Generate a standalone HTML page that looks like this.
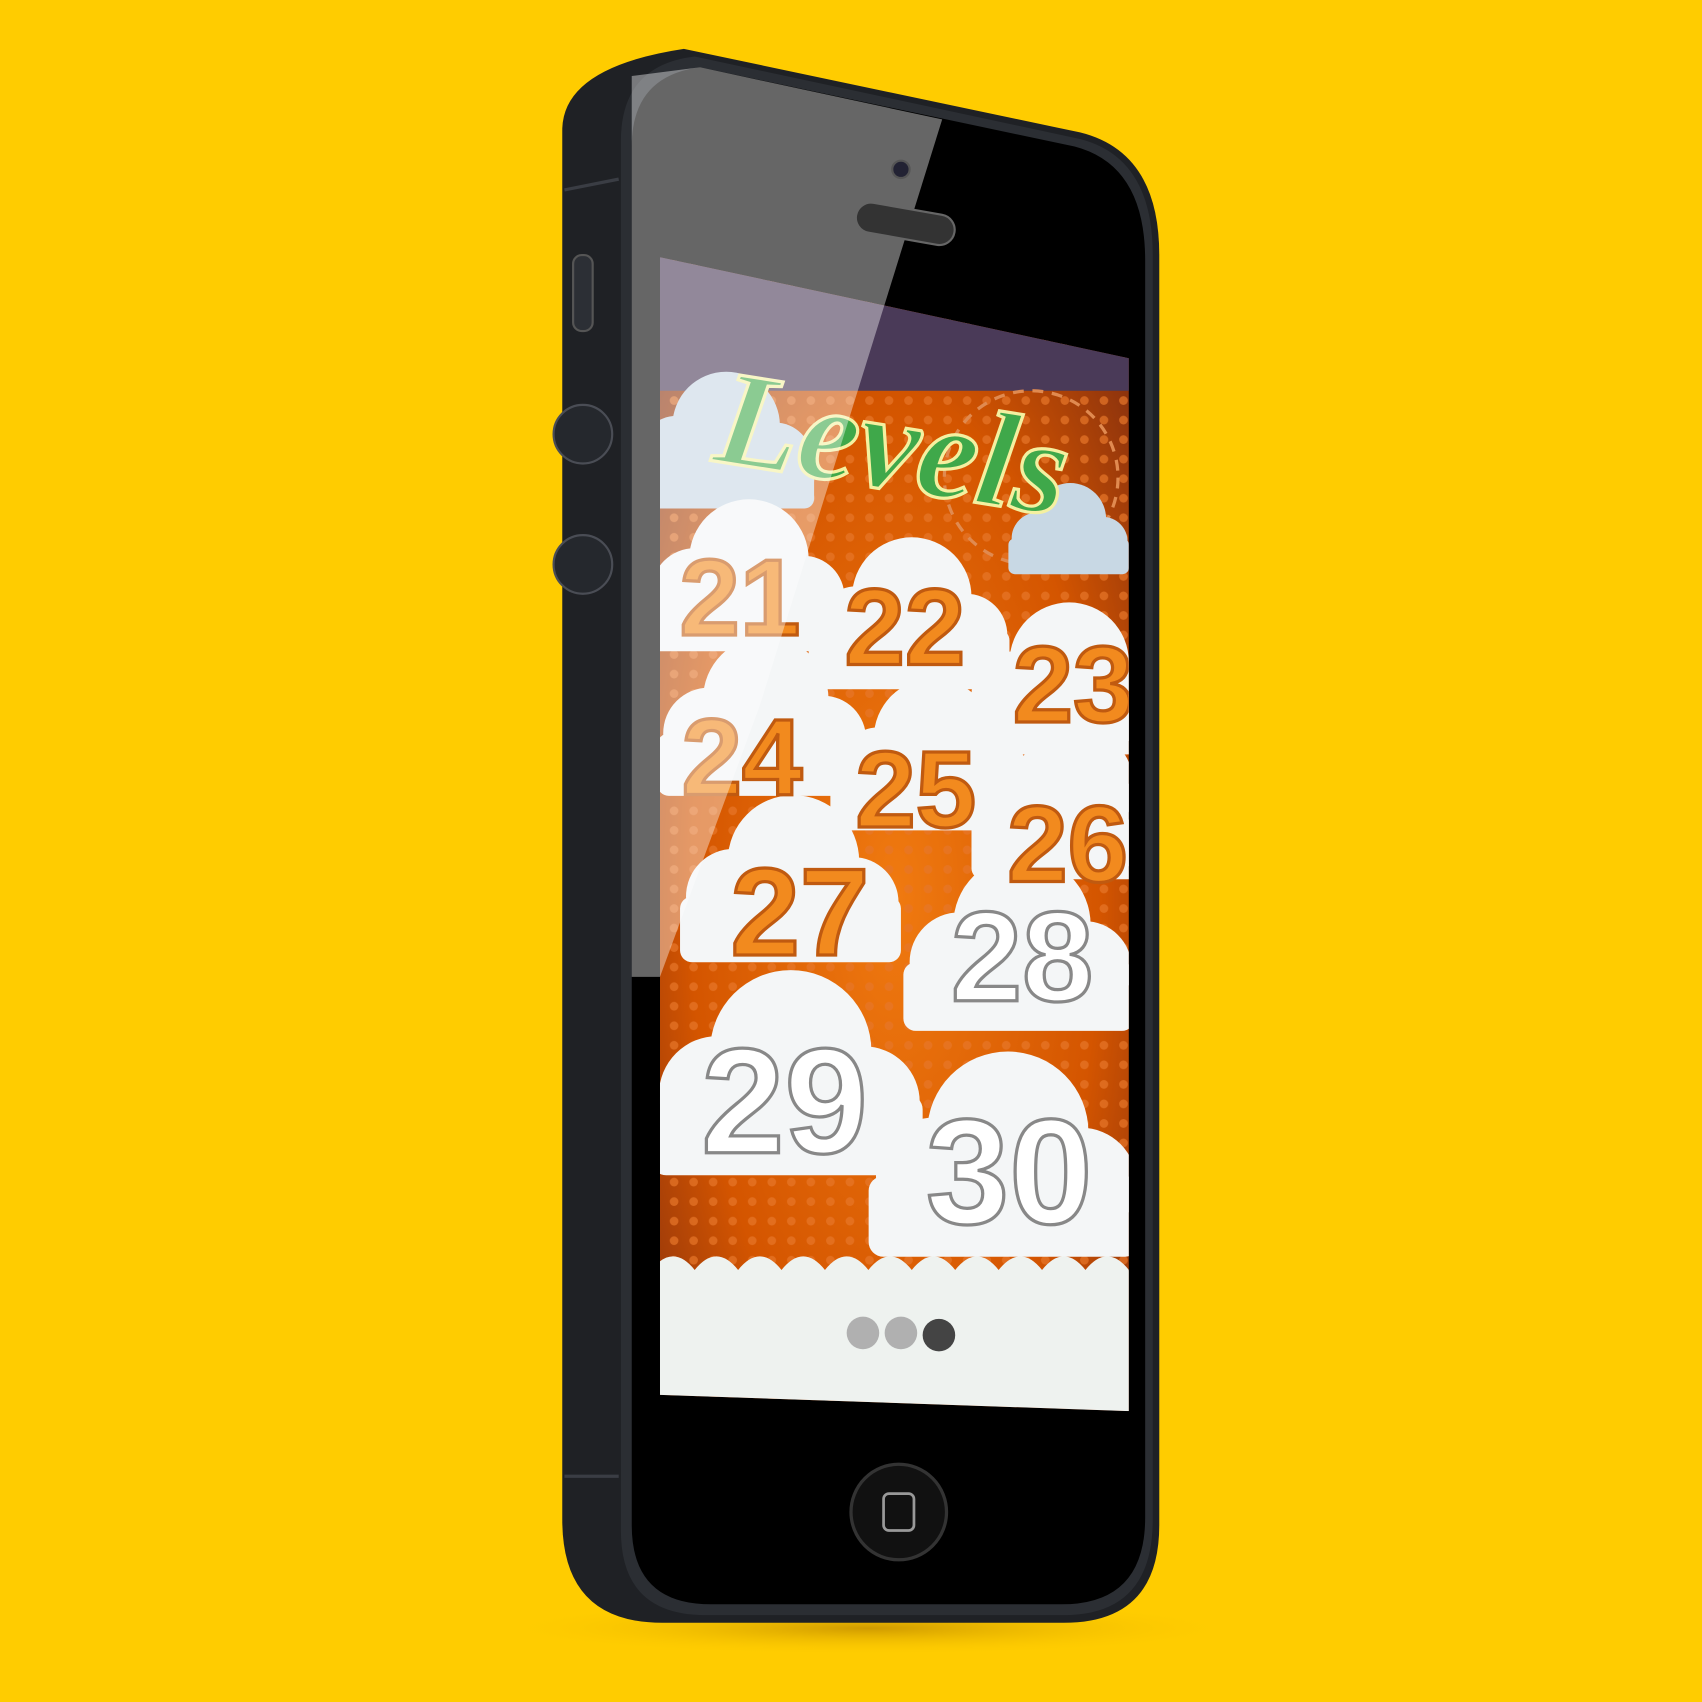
<!DOCTYPE html>
<html><head><meta charset="utf-8"><style>
html,body{margin:0;padding:0;background:#ffcc00;}
svg{display:block}
.n{font-family:"Liberation Sans",sans-serif;font-weight:bold}
</style></head><body>
<svg width="1702" height="1702" viewBox="0 0 1568 1568" xmlns="http://www.w3.org/2000/svg">
<defs>
<clipPath id="scr"><polygon points="608,237 1040,330 1040,1300 608,1285"/></clipPath>
<radialGradient id="bg" cx="0.5" cy="0.55" r="0.7">
<stop offset="0" stop-color="#f07a10"/><stop offset="0.6" stop-color="#d45500"/><stop offset="1" stop-color="#7a2a10"/></radialGradient>
<pattern id="dots" width="18" height="18" patternUnits="userSpaceOnUse"><circle cx="9" cy="9" r="4" fill="#e8762a" opacity="0.7"/></pattern>
<radialGradient id="sh" cx="0.5" cy="0.5" r="0.5"><stop offset="0" stop-color="#b07a00" stop-opacity="0.6"/><stop offset="1" stop-color="#ffcc00" stop-opacity="0"/></radialGradient>
<g id="cloud"><circle cx="-40" cy="10" r="40"/><circle cx="10" cy="-20" r="55"/><circle cx="60" cy="15" r="38"/><rect x="-85" y="10" width="185" height="55" rx="10"/></g>
</defs>
<ellipse cx="800" cy="1500" rx="340" ry="25" fill="url(#sh)"/>
<path d="M630,45 L995,122 Q1068,140 1068,235 L1068,1405 Q1068,1495 980,1495 L610,1495 Q518,1495 518,1400 L518,120 Q518,62 630,45 Z" fill="#1f2125"/>
<path d="M520,175 L570,165 M520,1360 L570,1360" stroke="#3a3d44" stroke-width="3"/>
<path d="M640,52 L995,128 Q1062,145 1062,235 L1062,1400 Q1062,1488 980,1488 L650,1488 Q572,1488 572,1410 L572,130 Q572,60 640,52 Z" fill="#2b2e33"/>
<path d="M645,62 L990,135 Q1055,152 1055,240 L1055,1398 Q1055,1478 978,1478 L655,1478 Q582,1478 582,1405 L582,135 Q582,70 645,62 Z" fill="#000"/>
<rect x="528" y="235" width="18" height="70" rx="8" fill="#2c2f35" stroke="#555" stroke-width="2"/>
<circle cx="537" cy="400" r="27" fill="#25282d" stroke="#4a4d55" stroke-width="2"/>
<circle cx="537" cy="520" r="27" fill="#25282d" stroke="#4a4d55" stroke-width="2"/>
<g clip-path="url(#scr)">
<rect x="600" y="230" width="450" height="1080" fill="url(#bg)"/>
<rect x="600" y="230" width="450" height="1080" fill="url(#dots)"/>
<rect x="600" y="230" width="450" height="130" fill="#4a3a58"/>
<circle cx="950" cy="440" r="80" fill="none" stroke="#e08a50" stroke-width="3" stroke-dasharray="10 8"/>
<g fill="#c8d8e4"><use href="#cloud" transform="translate(660,410) scale(0.9)"/><use href="#cloud" transform="translate(980,490) scale(0.6)"/></g>
<text x="658" y="450" style="font-family:'Liberation Serif',serif;font-style:italic;font-weight:bold" font-size="125" fill="#3fa84a" stroke="#f4f0a0" stroke-width="3" transform="rotate(9 820 420)">Levels</text>
<g fill="#f4f6f7">
<use href="#cloud" transform="translate(680,535)"/>
<use href="#cloud" transform="translate(830,570)"/>
<use href="#cloud" transform="translate(975,630)"/>
<use href="#cloud" transform="translate(695,665) scale(1.05)"/>
<use href="#cloud" transform="translate(850,700)"/>
<use href="#cloud" transform="translate(980,745)"/>
<use href="#cloud" transform="translate(720,815) scale(1.1)"/>
<use href="#cloud" transform="translate(930,875) scale(1.15)"/>
<use href="#cloud" transform="translate(715,995) scale(1.35)"/>
<use href="#cloud" transform="translate(915,1070) scale(1.35)"/>
</g>
<g class="n" fill="#f28a1e" stroke="#c05a10" stroke-width="3" font-size="100" style="font-weight:900">
<text x="626" y="585">21</text><text x="778" y="612">22</text><text x="933" y="665">23</text>
<text x="628" y="732">24</text><text x="788" y="762">25</text><text x="928" y="812">26</text>
<text x="673" y="880" font-size="115">27</text>
</g>
<g class="n" fill="#fff" stroke="#888" stroke-width="3" style="font-weight:900">
<text x="876" y="922" font-size="118">28</text>
<text x="646" y="1062" font-size="138">29</text>
<text x="853" y="1127" font-size="138">30</text>
</g>
<path d="M600,1170 q20,-25 40,0 q20,-25 40,0 q20,-25 40,0 q20,-25 40,0 q20,-25 40,0 q20,-25 40,0 q20,-25 40,0 q20,-25 40,0 q20,-25 40,0 q20,-25 40,0 q20,-25 40,0 L1050,1310 L600,1310 Z" fill="#eef2ef"/>
<circle cx="795" cy="1228" r="15" fill="#b0b0b0"/><circle cx="830" cy="1228" r="15" fill="#b0b0b0"/><circle cx="865" cy="1230" r="15" fill="#444"/>
</g>
<polygon points="582,70 645,62 868,110 700,650 608,900 582,900" fill="#fff" opacity="0.4"/>
<rect x="788" y="192" width="92" height="28" rx="14" fill="#333" stroke="#666" stroke-width="2" transform="rotate(10 833 206)"/>
<circle cx="830" cy="156" r="8" fill="#223" stroke="#555" stroke-width="2"/>
<circle cx="828" cy="1393" r="44" fill="#111" stroke="#333" stroke-width="3"/>
<rect x="814" y="1376" width="28" height="34" rx="5" fill="none" stroke="#999" stroke-width="2.5"/>
</svg>
</body></html>
